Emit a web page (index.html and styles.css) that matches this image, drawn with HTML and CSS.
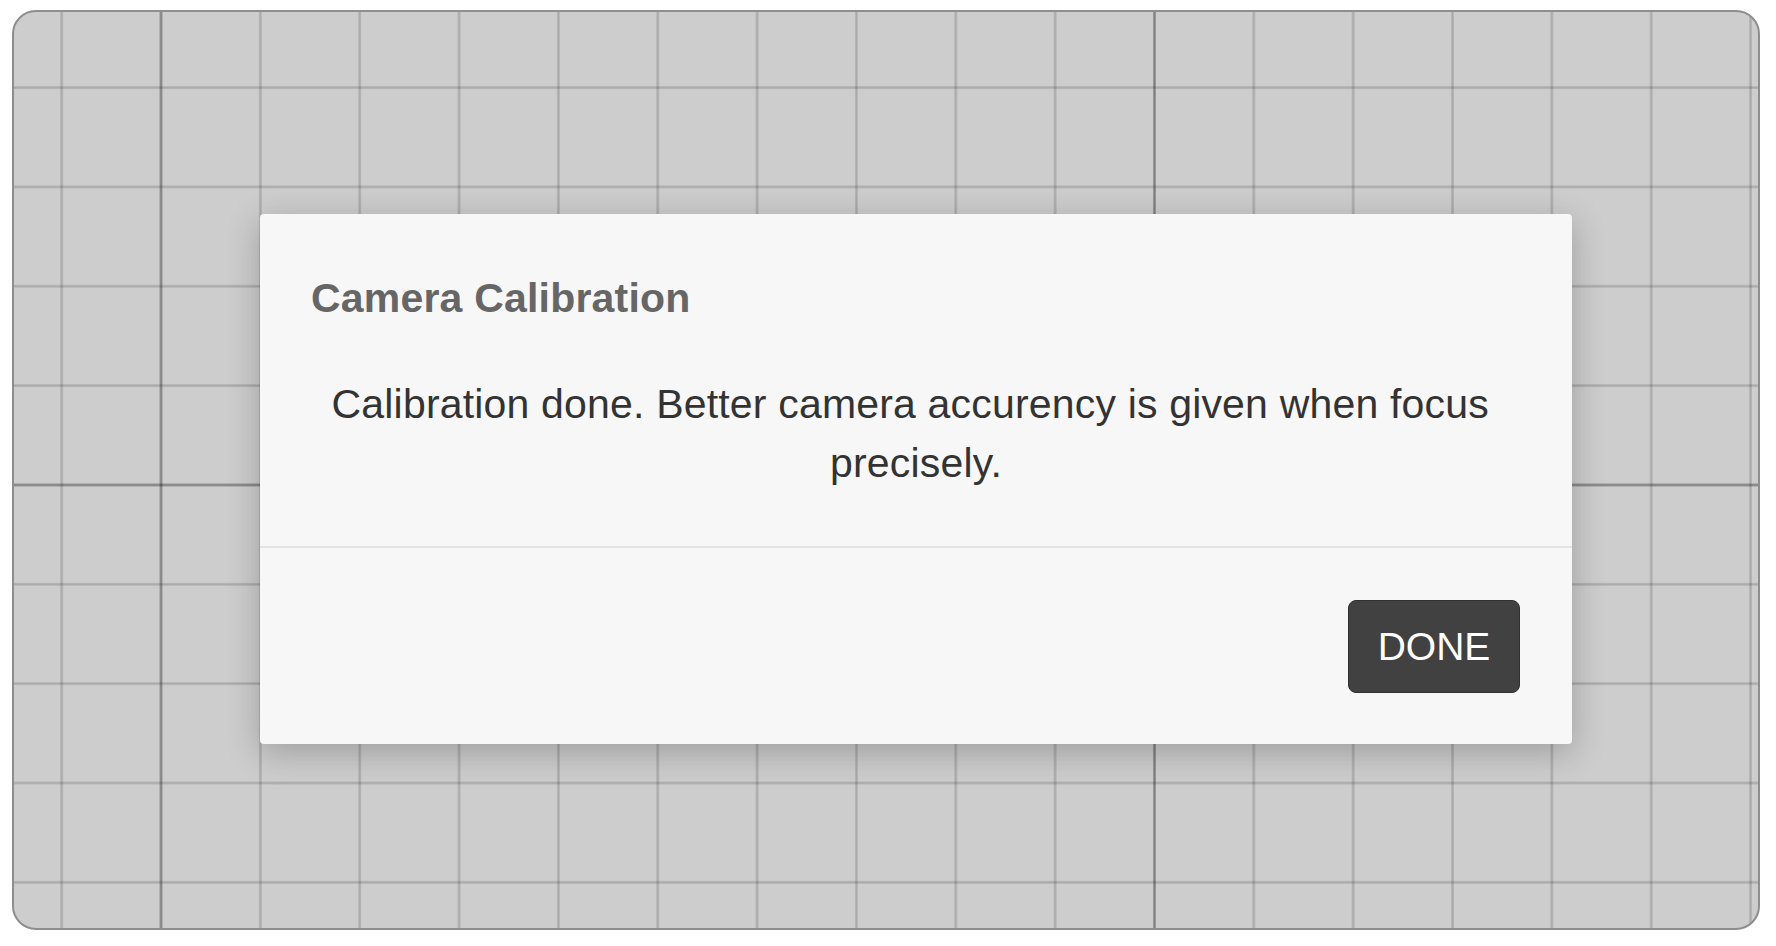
FILE: index.html
```html
<!DOCTYPE html>
<html>
  <head>
    <meta http-equiv="Content-Type" content="text/html; charset=utf-8">
    <title>Camera Calibration</title>
    <link rel="stylesheet" href="styles.css">
  </head>
  <body>
    <div class="canvas">
      <div class="dialog">
        <div class="dialog-body">
          <h2 class="dialog-title">Camera Calibration</h2>
          <p class="dialog-text">Calibration done. Better camera accurency is given when focus precisely.</p>
        </div>
        <div class="dialog-footer">
          <button class="btn" type="button">DONE</button>
        </div>
      </div>
    </div>
  </body>
</html>
```

FILE: styles.css
```css
html, body { margin: 0; height: 100%; background: #fff; }
body { padding: 10px 16px 16px 12px; box-sizing: border-box; font-family: "Liberation Sans", Arial, sans-serif; }

/* grid canvas: minor line every 99.35px, major every 10 cells */
.canvas {
  box-sizing: border-box; height: 920px;
  border: 2px solid #8e8e8e; border-radius: 24px;
  padding: 202px 0 0 246px;
  background-color: #cdcdcd;
  background-image:
    linear-gradient(to right, rgba(0,0,0,.08) 0, rgba(0,0,0,.25) 1px, rgba(0,0,0,.25) 2px, rgba(0,0,0,.08) 3px, transparent 3px),
    linear-gradient(to bottom, rgba(0,0,0,.08) 0, rgba(0,0,0,.25) 1px, rgba(0,0,0,.25) 2px, rgba(0,0,0,.08) 3px, transparent 3px),
    linear-gradient(to right, rgba(0,0,0,.07) 0, rgba(0,0,0,.17) 1px, rgba(0,0,0,.17) 2px, rgba(0,0,0,.07) 3px, transparent 3px),
    linear-gradient(to bottom, rgba(0,0,0,.07) 0, rgba(0,0,0,.17) 1px, rgba(0,0,0,.17) 2px, rgba(0,0,0,.07) 3px, transparent 3px);
  background-size: 993.5px 993.5px, 993.5px 993.5px, 99.35px 99.35px, 99.35px 99.35px;
  background-position: 145.5px 0, 0 471.5px, 46.2px 0, 0 74.1px;
}

.dialog {
  width: 1312px;
  background: #f7f7f7; border-radius: 4px;
  box-shadow: 0 8px 34px rgba(0,0,0,.24);
}
.dialog-body { padding: 61px 51px 54px 51px; border-bottom: 2px solid #e3e3e3; }
.dialog-title { margin: 0 0 53px 0; font-size: 41px; line-height: 47px; font-weight: bold; color: #666; letter-spacing: 0.2px; }
.dialog-text { margin: 0; font-size: 41px; line-height: 58.5px; color: #333; text-align: center; letter-spacing: 0.18px; white-space: break-spaces; }

.dialog-footer { display: flex; justify-content: flex-end; padding: 52px 52px 51px 52px; }
.btn {
  height: 93px; width: 172px; padding: 0;
  font-family: inherit; font-size: 39px; color: #fff;
  background: #414141; border: 1px solid #303030; border-radius: 8px;
  cursor: pointer;
}
```
